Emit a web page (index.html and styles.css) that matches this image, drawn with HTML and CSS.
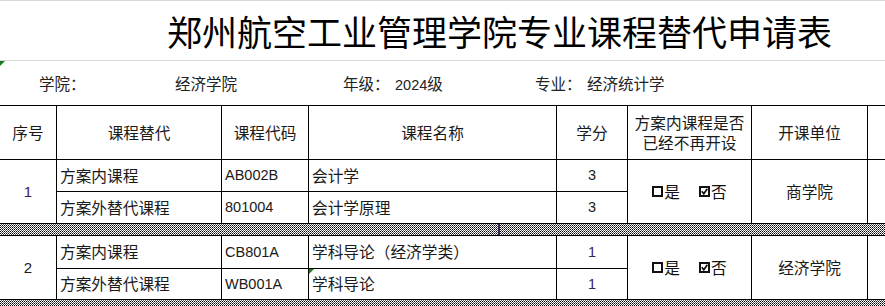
FILE: index.html
```html
<!DOCTYPE html>
<html lang="zh-CN">
<head>
<meta charset="utf-8">
<title>郑州航空工业管理学院专业课程替代申请表</title>
<link rel="stylesheet" href="styles.css">
</head>
<body>
<div class="title-row">
  <h1 class="title">郑州航空工业管理学院专业课程替代申请表</h1>
</div>
<div class="info-row">
  <span class="mark"></span>
  <span class="i-l1">学院：</span>
  <span class="i-v1">经济学院</span>
  <span class="i-l2">年级：</span>
  <span class="i-v2"><span class="lat">2024</span>级</span>
  <span class="i-l3">专业：</span>
  <span class="i-v3">经济统计学</span>
</div>
<div class="sheet">
  <div class="c hd ctr">序号</div>
  <div class="c hd ctr">课程替代</div>
  <div class="c hd ctr">课程代码</div>
  <div class="c hd ctr">课程名称</div>
  <div class="c hd ctr">学分</div>
  <div class="c hd ctr two"><span class="ln">方案内课程是否</span><span class="ln">已经不再开设</span></div>
  <div class="c hd ctr">开课单位</div>
  <div class="c hd last"></div>

  <div class="c ctr span2 seq"><span class="lat purple">1</span></div>
  <div class="c">方案内课程</div>
  <div class="c"><span class="lat">AB002B</span></div>
  <div class="c">会计学</div>
  <div class="c ctr"><span class="lat">3</span></div>
  <div class="c ctr span2 chk">
    <span class="opt"><svg class="box" width="11" height="11" viewBox="0 0 11 11"><rect x="1" y="1" width="9" height="9" fill="none" stroke="#111" stroke-width="2"/></svg>是</span>
    <span class="opt"><svg class="box" width="11" height="11" viewBox="0 0 11 11"><rect x="1" y="1" width="9" height="9" fill="none" stroke="#111" stroke-width="2"/><polyline points="2.8,5.2 4.8,7.8 8.3,2.8" fill="none" stroke="#111" stroke-width="1.7"/></svg>否</span>
  </div>
  <div class="c ctr span2">商学院</div>
  <div class="c span2 last"></div>
  <div class="c">方案外替代课程</div>
  <div class="c"><span class="lat">801004</span></div>
  <div class="c">会计学原理</div>
  <div class="c ctr"><span class="lat">3</span></div>

  <div class="band">
    <svg class="dots" width="885" height="11" shape-rendering="crispEdges">
      <defs>
        <pattern id="dotfill" width="2" height="2" patternUnits="userSpaceOnUse">
          <rect x="0" y="1" width="1" height="1" fill="#000"/>
          <rect x="1" y="0" width="1" height="1" fill="#555"/>
        </pattern>
      </defs>
      <rect x="0" y="0" width="885" height="11" fill="url(#dotfill)"/>
      <rect x="498" y="0" width="1.5" height="11" fill="#3c2058"/>
    </svg>
  </div>

  <div class="c ctr span2 seq r2"><span class="lat">2</span></div>
  <div class="c r2a">方案内课程</div>
  <div class="c r2a"><span class="lat">CB801A</span></div>
  <div class="c r2a">学科导论（经济学类）</div>
  <div class="c ctr r2a"><span class="lat purple">1</span></div>
  <div class="c ctr span2 chk r2">
    <span class="opt"><svg class="box" width="11" height="11" viewBox="0 0 11 11"><rect x="1" y="1" width="9" height="9" fill="none" stroke="#111" stroke-width="2"/></svg>是</span>
    <span class="opt"><svg class="box" width="11" height="11" viewBox="0 0 11 11"><rect x="1" y="1" width="9" height="9" fill="none" stroke="#111" stroke-width="2"/><polyline points="2.8,5.2 4.8,7.8 8.3,2.8" fill="none" stroke="#111" stroke-width="1.7"/></svg>否</span>
  </div>
  <div class="c ctr span2 r2">经济学院</div>
  <div class="c span2 last r2"></div>
  <div class="c r2b">方案外替代课程</div>
  <div class="c r2b"><span class="lat">WB001A</span></div>
  <div class="c r2b tri">学科导论</div>
  <div class="c ctr r2b"><span class="lat purple">1</span></div>

  <div class="band end">
    <svg class="dots" width="885" height="7" shape-rendering="crispEdges">
      <rect x="0" y="0" width="885" height="7" fill="url(#dotfill)"/>
    </svg>
  </div>
</div>
</body>
</html>
```
FILE: styles.css
```css
html, body {
  margin: 0;
  padding: 0;
  background: #fff;
}
body {
  width: 885px;
  height: 306px;
  overflow: hidden;
  font-family: "Noto Sans CJK SC", "Liberation Sans", sans-serif;
  color: #1a1a1a;
}
.title-row {
  height: 61px;
  box-sizing: border-box;
  border-top: 1px solid #d9d9d9;
  border-bottom: 1px solid #d9d9d9;
  display: flex;
  align-items: center;
}
.title {
  margin: 0;
  padding-left: 167px;
  font-size: 35px;
  font-weight: 400;
  line-height: 1;
  color: #000;
  white-space: nowrap;
}
.info-row {
  position: relative;
  height: 44px;
  display: flex;
  align-items: center;
  padding-left: 39px;
  font-size: 15.5px;
  color: #222;
  white-space: nowrap;
}
.info-row .mark {
  position: absolute;
  left: 0;
  top: 0;
  width: 0;
  height: 0;
  border-top: 5px solid #1c7a1c;
  border-right: 5px solid transparent;
}
.i-l1 { width: 136px; }
.i-v1 { width: 168px; }
.i-l2 { width: 52px; }
.i-v2 { width: 140px; }
.i-l3 { width: 52px; }
.lat {
  font-family: "Liberation Sans", sans-serif;
  font-size: 14.5px;
}
.purple { color: #3c2058; }

.sheet {
  display: grid;
  grid-template-columns: 57px 165px 87px 248px 71px 124px 116px 1fr;
  grid-template-rows: 54px 32px 32px 12px 33px 31px 7px;
  border-top: 1px solid #000;
  font-size: 15.7px;
  color: #1a1a1a;
}
.c {
  box-sizing: border-box;
  border-right: 1px solid #000;
  border-bottom: 1px solid #000;
  display: flex;
  align-items: center;
  padding-left: 3px;
  white-space: nowrap;
  line-height: 1;
  position: relative;
}
.c.ctr {
  justify-content: center;
  padding-left: 0;
}
.c.last { border-right: none; }
.hd.two {
  flex-direction: column;
  gap: 0;
}
.ln {
  display: block;
  line-height: 20px;
  height: 20px;
}
.span2 { grid-row: span 2; }
.seq .lat { font-size: 15px; }
.r2 { grid-row: 5 / span 2; }
.r2a { grid-row: 5; }
.r2b { grid-row: 6; }
.chk {
  gap: 19px;
  color: #111;
}
.opt {
  display: inline-flex;
  align-items: center;
  gap: 1px;
}
.box { display: block; }
.tri::before {
  content: "";
  position: absolute;
  left: 0;
  top: 0;
  border-top: 5px solid #1c7a1c;
  border-right: 5px solid transparent;
}
.band {
  grid-column: 1 / -1;
  box-sizing: border-box;
  border-bottom: 1px solid #000;
  background: #fff;
  overflow: hidden;
}
.band.end { border-bottom: none; }
.dots { display: block; }
```
